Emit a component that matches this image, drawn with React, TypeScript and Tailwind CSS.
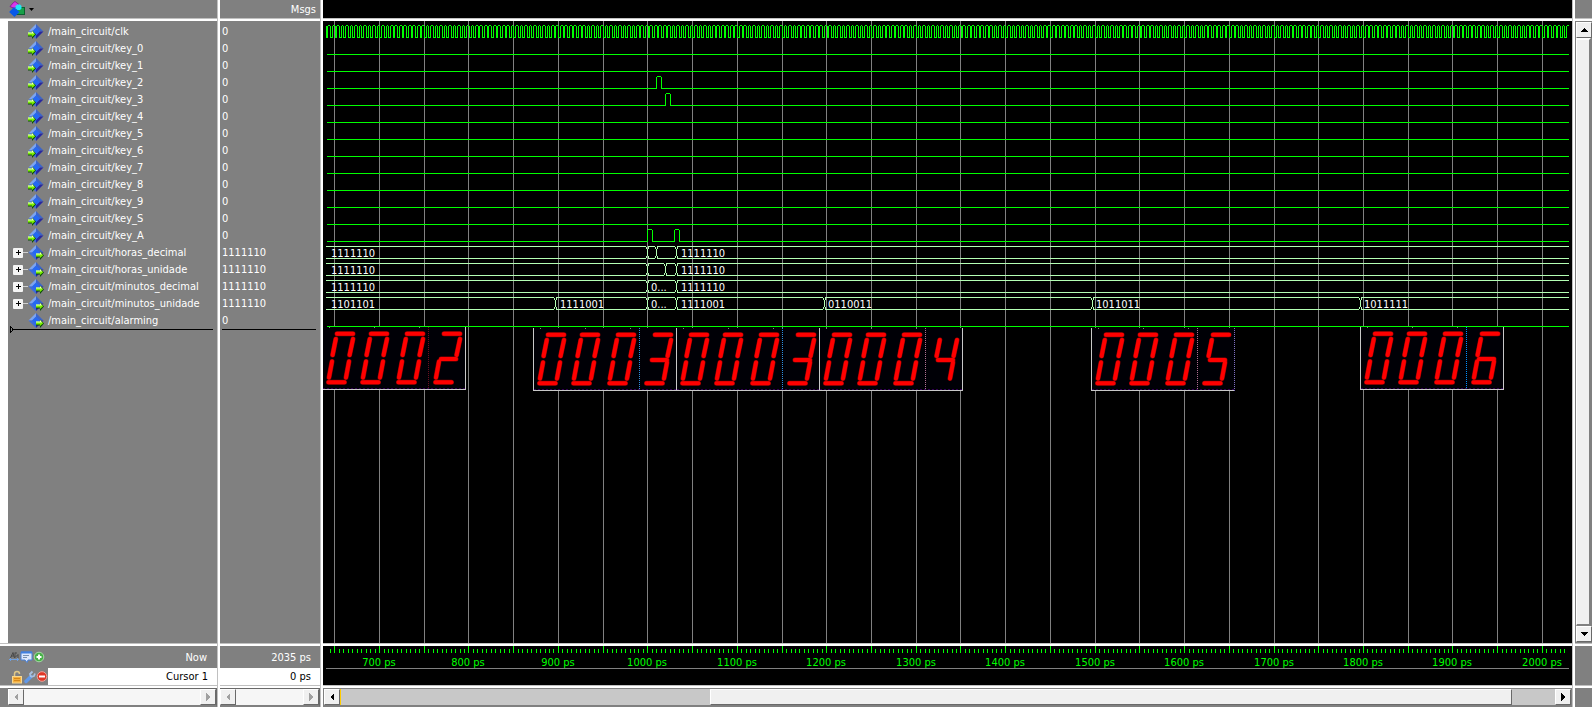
import React from "react";

type Kind = "in" | "bus" | "out";

interface Signal {
  name: string;
  value: string;
  kind: Kind;
}

const signals: Signal[] = [
  { name: "/main_circuit/clk", value: "0", kind: "in" },
  { name: "/main_circuit/key_0", value: "0", kind: "in" },
  { name: "/main_circuit/key_1", value: "0", kind: "in" },
  { name: "/main_circuit/key_2", value: "0", kind: "in" },
  { name: "/main_circuit/key_3", value: "0", kind: "in" },
  { name: "/main_circuit/key_4", value: "0", kind: "in" },
  { name: "/main_circuit/key_5", value: "0", kind: "in" },
  { name: "/main_circuit/key_6", value: "0", kind: "in" },
  { name: "/main_circuit/key_7", value: "0", kind: "in" },
  { name: "/main_circuit/key_8", value: "0", kind: "in" },
  { name: "/main_circuit/key_9", value: "0", kind: "in" },
  { name: "/main_circuit/key_S", value: "0", kind: "in" },
  { name: "/main_circuit/key_A", value: "0", kind: "in" },
  { name: "/main_circuit/horas_decimal", value: "1111110", kind: "bus" },
  { name: "/main_circuit/horas_unidade", value: "1111110", kind: "bus" },
  { name: "/main_circuit/minutos_decimal", value: "1111110", kind: "bus" },
  { name: "/main_circuit/minutos_unidade", value: "1111110", kind: "bus" },
  { name: "/main_circuit/alarming", value: "0", kind: "out" },
];

const ROW = 17;
const START = 4;
const END = 1246;

/* Time in ps to a column of the wave canvas. */
const timeX = (t: number) => Math.round(324.4 + (t - 1000) * 0.8945);
const low = (row: number) => 16 + row * ROW;
const high = (row: number) => 4 + row * ROW;

const pulses: Record<number, [number, number][]> = {
  3: [[333, 338]],
  4: [[342, 347]],
  12: [
    [324, 329],
    [351, 356],
  ],
};

interface Bus {
  row: number;
  edges: number[];
  labels: [number, string][];
}

const buses: Bus[] = [
  { row: 13, edges: [324, 333, 353], labels: [[8, "1111110"], [358, "1111110"]] },
  { row: 14, edges: [324, 342, 353], labels: [[8, "1111110"], [358, "1111110"]] },
  { row: 15, edges: [324, 353], labels: [[8, "1111110"], [328, "0..."], [358, "1111110"]] },
  {
    row: 16,
    edges: [232, 324, 353, 501, 769, 1037],
    labels: [
      [8, "1101101"],
      [237, "1111001"],
      [328, "0..."],
      [358, "1111001"],
      [505, "0110011"],
      [773, "1011011"],
      [1041, "1011111"],
    ],
  },
];

function clockPath() {
  let d = "";
  let x = START;
  for (let k = 0; k < 278; k++) {
    const fall = Math.floor(3.1 + k * 4.4725);
    const rise = Math.floor(3.1 + k * 4.4725 + 1.79);
    if (rise >= END) break;
    if (k > 0) d += `M${x + 1} 4.5H${fall}`;
    d += `M${fall + 0.5} 5V17M${rise + 0.5} 5V17M${fall} 16.5H${rise + 1}`;
    x = rise;
  }
  return d + `M${x + 1} 4.5H${END}`;
}

function bitPath(row: number) {
  const lo = low(row) + 0.5;
  const hi = high(row) + 0.5;
  let d = "";
  let x = START;
  for (const [a, b] of pulses[row] ?? []) {
    d += `M${x} ${lo}H${a + 1}M${a + 0.5} ${lo}V${hi + 0.5}M${a + 1} ${hi}H${b}M${b + 0.5} ${hi + 0.5}V${lo}`;
    x = b;
  }
  return d + `M${x} ${lo}H${END}`;
}

function busPath({ row, edges }: Bus) {
  const t = high(row);
  const b = low(row);
  let d = "";
  let x = START - 1;
  for (const e of edges) {
    d += `M${x} ${t + 0.5}H${e - 1}M${x} ${b + 0.5}H${e - 1}`;
    d += `M${e - 0.5} ${t + 1}V${t + 3}M${e + 1.5} ${t}V${t + 3}M${e + 0.5} ${t + 3}V${b - 2}`;
    d += `M${e - 0.5} ${b - 2}V${b}M${e + 1.5} ${b - 2}V${b + 1}`;
    x = e + 2;
  }
  return d + `M${x} ${t + 0.5}H${END}M${x} ${b + 0.5}H${END}`;
}

const segs: Record<string, string> = {
  a: "M15 6.7H31",
  b: "M31 12L27.6 28",
  c: "M27 34.5L24 50.5",
  d: "M6.5 55.3H22.5",
  e: "M10 34.5L7 50.5",
  f: "M13.8 12L10.6 28",
  g: "M12 32H27",
};

const glyphs: Record<string, string> = {
  "0": "abcdef",
  "2": "abged",
  "3": "abgcd",
  "4": "fgbc",
  "5": "afgcd",
  "6": "afgecd",
};

function Display({ x, y, text, dash, last }: { x: number; y: number; text: string; dash: string; last?: string }) {
  const offsets = [0, 34, 70, 107];
  return (
    <g transform={`translate(${x} ${y})`}>
      <rect width="144" height="63" fill="#000006" />
      <path d="M7 .5h1M52 .5h1M97 .5h1" stroke="#808080" shapeRendering="crispEdges" />
      <path d="M1 61.5H143" stroke="#300050" strokeDasharray="2 2" shapeRendering="crispEdges" />
      <path d="M106.5 0V62" stroke={dash} strokeDasharray="1 1" shapeRendering="crispEdges" />
      <path d="M.5 0V62.5H143.5" fill="none" stroke="#c8c8c8" shapeRendering="crispEdges" />
      <path
        d="M143.5 0V63"
        stroke={last ?? "#c8c8c8"}
        strokeDasharray={last ? "1 1" : undefined}
        shapeRendering="crispEdges"
      />
      {text.split("").map((c, i) => {
        const d = glyphs[c].split("").map((s) => segs[s]).join("");
        return (
          <g key={i} transform={`translate(${offsets[i]} 0)`} strokeLinecap="round" fill="none">
            <path d={d} stroke="#8b0000" strokeWidth="5" />
            <path d={d} stroke="#ff0000" strokeWidth="4" />
          </g>
        );
      })}
    </g>
  );
}

function WaveCanvas() {
  const grid: number[] = [];
  for (let t = 650; t <= 2000; t += 50) grid.push(timeX(t));
  return (
    <svg className="block h-full w-full" role="img" aria-label="Waveforms">
      {grid.map((x) => (
        <line key={x} x1={x + 0.5} x2={x + 0.5} y1="0" y2="100%" stroke="#808080" shapeRendering="crispEdges" />
      ))}
      <g stroke="#00ff00" fill="none" shapeRendering="crispEdges">
        <path d={clockPath()} />
        {signals.map((s, i) => (i > 0 && s.kind !== "bus" ? <path key={s.name} d={bitPath(i)} /> : null))}
      </g>
      {buses.map((b) => (
        <g key={b.row}>
          <path d={busPath(b)} stroke="#b4ffb4" fill="none" shapeRendering="crispEdges" />
          {b.labels.map(([x, label]) => (
            <text key={x} x={x} y={low(b.row) - 1} fill="#ffffff">
              {label}
            </text>
          ))}
        </g>
      ))}
      <Display x={-1} y={306} text="0002" dash="#6a1020" />
      <Display x={210} y={307} text="0003" dash="#2f8fe0" />
      <Display x={353} y={307} text="0003" dash="#2f8fe0" />
      <Display x={496} y={307} text="0004" dash="#b07090" />
      <Display x={768} y={307} text="0005" dash="#b07090" last="#8070c0" />
      <Display x={1037} y={306} text="0006" dash="#0090ff" />
    </svg>
  );
}

function Ruler() {
  const minor: number[] = [];
  const major: number[] = [];
  for (let t = 645; t <= 2025; t += 5) (t % 50 === 0 ? major : minor).push(timeX(t));
  const labels: number[] = [];
  for (let t = 700; t <= 2000; t += 100) labels.push(t);
  return (
    <svg className="block h-full w-full" role="img" aria-label="Timeline">
      <path
        d={minor.map((x) => `M${x + 0.5} 3V7`).join("") + major.map((x) => `M${x + 0.5} 0V7`).join("")}
        stroke="#00ff00"
        shapeRendering="crispEdges"
      />
      {labels.map((t) => (
        <text key={t} x={timeX(t)} y="20" fill="#00ff00" textAnchor="middle">
          {t} ps
        </text>
      ))}
      <path d={`M3 22.5H${END}`} stroke="#808080" shapeRendering="crispEdges" />
    </svg>
  );
}

function SignalIcon({ output }: { output: boolean }) {
  return (
    <svg width="16" height="16" viewBox="0 0 16 16" className="shrink-0" aria-hidden="true">
      <path d="M8 0L0.5 7.5L4.5 7.5L8 4Z" fill="#7ca4f0" />
      <path d="M8 0L15.5 7.5L11.5 7.5L8 4Z" fill="#3c64c8" />
      <path d="M0.5 7.5L8 15L8 11L4.5 7.5Z" fill="#3c6cdc" />
      <path d="M15.5 7.5L8 15L8 11L11.5 7.5Z" fill="#2828a0" />
      <path d="M8 3.5L12 7.5L8 11.5L4 7.5Z" fill="#2468f4" />
      <g transform={output ? "translate(8 2)" : "translate(0 2)"}>
        <path d="M0 7.5H4V4.5L8 8.5L4 13V10.5H0Z" fill="#0c4c0c" />
        <path d="M0 6.5H4V5L7.2 8.2L4 11V9.5H0Z" fill="#7cf000" />
        <path d="M0 6.5H4V5L6 7.5H0Z" fill="#f0ffd0" />
      </g>
    </svg>
  );
}

function ObjectsIcon() {
  return (
    <svg width="16" height="16" viewBox="0 0 16 16" aria-hidden="true">
      <rect x="7.500" y="6.500" width="8" height="7" fill="#18a048" stroke="#0c6030" />
      <path d="M4.500 1.500L6 .5L10 3.500L5.500 7.500L1 5.500Z" fill="#d838e8" stroke="#80108c" strokeWidth=".8" />
      <path d="M5 6L10.500 11L5.500 16L.2 11Z" fill="#0858e8" />
      <path d="M8.500 3.500H11L12.500 5V7.500L11 9H8.500L6.500 7.500V5Z" fill="#20e8f8" />
    </svg>
  );
}

function ToolIcons({ row }: { row: "now" | "cursor" }) {
  if (row === "now") {
    return (
      <svg width="36" height="12" viewBox="0 0 36 12" aria-hidden="true">
        <path d="M1.500 7L4 1.500L5.500 7M2 5H5M6 1.500V6.500L9 3.500V7M6 2H8" stroke="#484848" fill="none" />
        <path d="M0 8.500H10M2 7L.5 8.500L2 10M8 7L9.500 8.500L8 10" stroke="#70a0e0" fill="none" />
        <path d="M12 1H23V9H19L18 11.500L16 9H12Z" fill="#dce8fc" stroke="#4880d8" />
        <path d="M12 1.500H23" stroke="#4080e0" strokeWidth="2" />
        <path d="M14 4.500H20M14 6.500H18" stroke="#7890b0" />
        <circle cx="30" cy="6" r="4.800" fill="#48b048" stroke="#a8d8a8" />
        <path d="M27.500 6H32.500M30 3.500V8.500" stroke="#fff" strokeWidth="2" />
      </svg>
    );
  }
  return (
    <svg width="37" height="14" viewBox="0 0 37 14" aria-hidden="true">
      <path d="M3.500 7V4Q3.500 1.500 6 1.500Q8.500 1.500 8.500 4" stroke="#e0c888" strokeWidth="1.500" fill="none" />
      <rect x="1.500" y="6.500" width="9" height="6.500" fill="#f4b040" stroke="#f8d890" />
      <path d="M3 8.500H9M3 10.500H9" stroke="#d88818" />
      <path d="M15 11.500L20 6.500" stroke="#6098e8" strokeWidth="3.500" strokeLinecap="round" />
      <path d="M20 7L19 4L21.500 1.500M20 7L23 6L24 3.500" stroke="#a8c0e0" strokeWidth="1.800" fill="none" />
      <circle cx="31" cy="6.500" r="4.800" fill="#e03828" stroke="#f0a098" />
      <path d="M28 6.500H34" stroke="#fff" strokeWidth="2" />
    </svg>
  );
}

type Dir = "left" | "right" | "up" | "down";

function ScrollButton({ dir, disabled = false }: { dir: Dir; disabled?: boolean }) {
  const shapes: Record<Dir, string> = {
    left: "M6 0V8L2 4Z",
    right: "M2 0V8L6 4Z",
    up: "M0 6H8L4 2Z",
    down: "M0 2H8L4 6Z",
  };
  return (
    <button
      type="button"
      disabled={disabled}
      aria-label={`Scroll ${dir}`}
      className="flex size-4 shrink-0 items-center justify-center border border-t-white border-r-[#696969] border-b-[#696969] border-l-white bg-[#f0f0f0]"
    >
      <svg width="8" height="8" viewBox="0 0 8 8" shapeRendering="crispEdges" aria-hidden="true">
        <path d={shapes[dir]} fill={disabled ? "#a0a0a0" : "#000000"} />
      </svg>
    </button>
  );
}

function IdleScrollbar() {
  return (
    <div className="flex h-[19px] shrink-0 border-t border-r border-b-2 border-[#696969] border-b-[#808080]">
      <ScrollButton dir="left" disabled />
      <div className="flex-1 bg-[#f6f6f6]" />
      <ScrollButton dir="right" disabled />
    </div>
  );
}

function HRule() {
  return <div className="h-[3px] shrink-0 border-t border-[#c0c0c0] bg-white" />;
}

function VRule() {
  return <div className="w-[3px] shrink-0 border-l border-[#c0c0c0] bg-white" />;
}

export default function App() {
  return (
    <div className="flex h-screen overflow-hidden bg-[#808080] font-['Tahoma','DejaVu_Sans_Condensed','Noto_Sans',sans-serif] text-[11px] leading-[17px] whitespace-nowrap text-white">
      <section className="flex w-[217px] shrink-0 flex-col" aria-label="Signals">
        <header className="flex h-[18px] shrink-0 items-start pl-[9px]">
          <button type="button" aria-label="Objects" className="flex items-center gap-1 pt-px">
            <ObjectsIcon />
            <svg width="5" height="3" viewBox="0 0 5 3" aria-hidden="true">
              <path d="M0 0H5L2.500 3Z" fill="#000" />
            </svg>
          </button>
        </header>
        <HRule />
        <div className="flex min-h-0 flex-1">
          <div className="w-2 shrink-0 bg-white" />
          <div className="flex-1">
            <ul className="pt-[2px]">
              {signals.map((s) => (
                <li key={s.name} className="flex h-[17px] items-center">
                  <span className="flex w-5 shrink-0 items-center pl-[5px]">
                    {s.kind === "bus" && (
                      <>
                        <button
                          type="button"
                          aria-label={`Expand ${s.name}`}
                          className="flex size-[10px] shrink-0 items-center justify-center rounded-[1px] bg-[#f4f4f4]"
                        >
                          <svg width="5" height="5" viewBox="0 0 5 5" shapeRendering="crispEdges" aria-hidden="true">
                            <path d="M0 2.500H5M2.500 0V5" stroke="#000" />
                          </svg>
                        </button>
                        <span className="h-px flex-1 bg-[#d0d0d0]" />
                      </>
                    )}
                  </span>
                  <SignalIcon output={s.kind !== "in"} />
                  <span className="pl-1">{s.name}</span>
                </li>
              ))}
            </ul>
            <svg className="-mt-[3px] ml-[2px] block w-[203px]" height="7" aria-hidden="true" shapeRendering="crispEdges">
              <path d="M3 3.500H203M.5 0V7M1 1L3 3.500L1 6" stroke="#000" fill="none" />
            </svg>
          </div>
        </div>
        <HRule />
        <div className="flex h-[22px] shrink-0 items-center justify-between pr-[10px] pl-[9px]">
          <ToolIcons row="now" />
          <span>Now</span>
        </div>
        <div className="flex h-[17px] shrink-0 items-center pl-[11px]">
          <ToolIcons row="cursor" />
          <span className="flex-1 bg-white pr-[9px] text-right text-black">Cursor 1</span>
        </div>
        <HRule />
        <div className="pl-2">
          <IdleScrollbar />
        </div>
      </section>
      <VRule />

      <section className="flex w-[100px] shrink-0 flex-col" aria-label="Values">
        <header className="flex h-[18px] shrink-0 items-center justify-end pr-1">Msgs</header>
        <HRule />
        <div className="min-h-0 flex-1">
          <ul className="pt-[2px] pl-[2px]">
            {signals.map((s) => (
              <li key={s.name} className="h-[17px]">
                {s.value}
              </li>
            ))}
          </ul>
          <div className="mr-1 ml-[2px] h-px bg-black" />
        </div>
        <HRule />
        <div className="flex h-[22px] shrink-0 items-center justify-end pr-[9px]">2035 ps</div>
        <div className="h-[17px] shrink-0 bg-white pr-[9px] text-right text-black">0 ps</div>
        <HRule />
        <IdleScrollbar />
      </section>
      <VRule />

      <section className="flex min-w-0 flex-1 flex-col" aria-label="Wave">
        <div className="h-[18px] shrink-0 bg-black" />
        <HRule />
        <div className="min-h-0 flex-1 bg-black">
          <WaveCanvas />
        </div>
        <HRule />
        <div className="h-[39px] shrink-0 bg-black">
          <Ruler />
        </div>
        <HRule />
        <div className="flex h-[19px] shrink-0 border-x border-t border-b-2 border-[#808080] bg-[#c8c8c8]">
          <ScrollButton dir="left" />
          <div className="w-px bg-[#ffcc00]" />
          <div className="grow-[370]" />
          <div className="grow-[801] border border-t-white border-r-[#696969] border-b-[#696969] border-l-white bg-[#f0f0f0]" />
          <div className="grow-[43]" />
          <ScrollButton dir="right" />
        </div>
      </section>
      <VRule />

      <aside className="flex w-[17px] shrink-0 flex-col" aria-label="Vertical scroll">
        <div className="h-[18px] shrink-0" />
        <HRule />
        <div className="flex min-h-0 flex-1 flex-col border border-[#808080]">
          <ScrollButton dir="up" />
          <div className="flex-1 border-t-2 border-r-2 border-b-2 border-l border-t-white border-r-[#808080] border-b-[#808080] border-l-white bg-[#f0f0f0]" />
          <ScrollButton dir="down" />
        </div>
        <HRule />
        <div className="h-[39px] shrink-0" />
        <HRule />
        <div className="h-[19px] shrink-0" />
      </aside>
    </div>
  );
}
